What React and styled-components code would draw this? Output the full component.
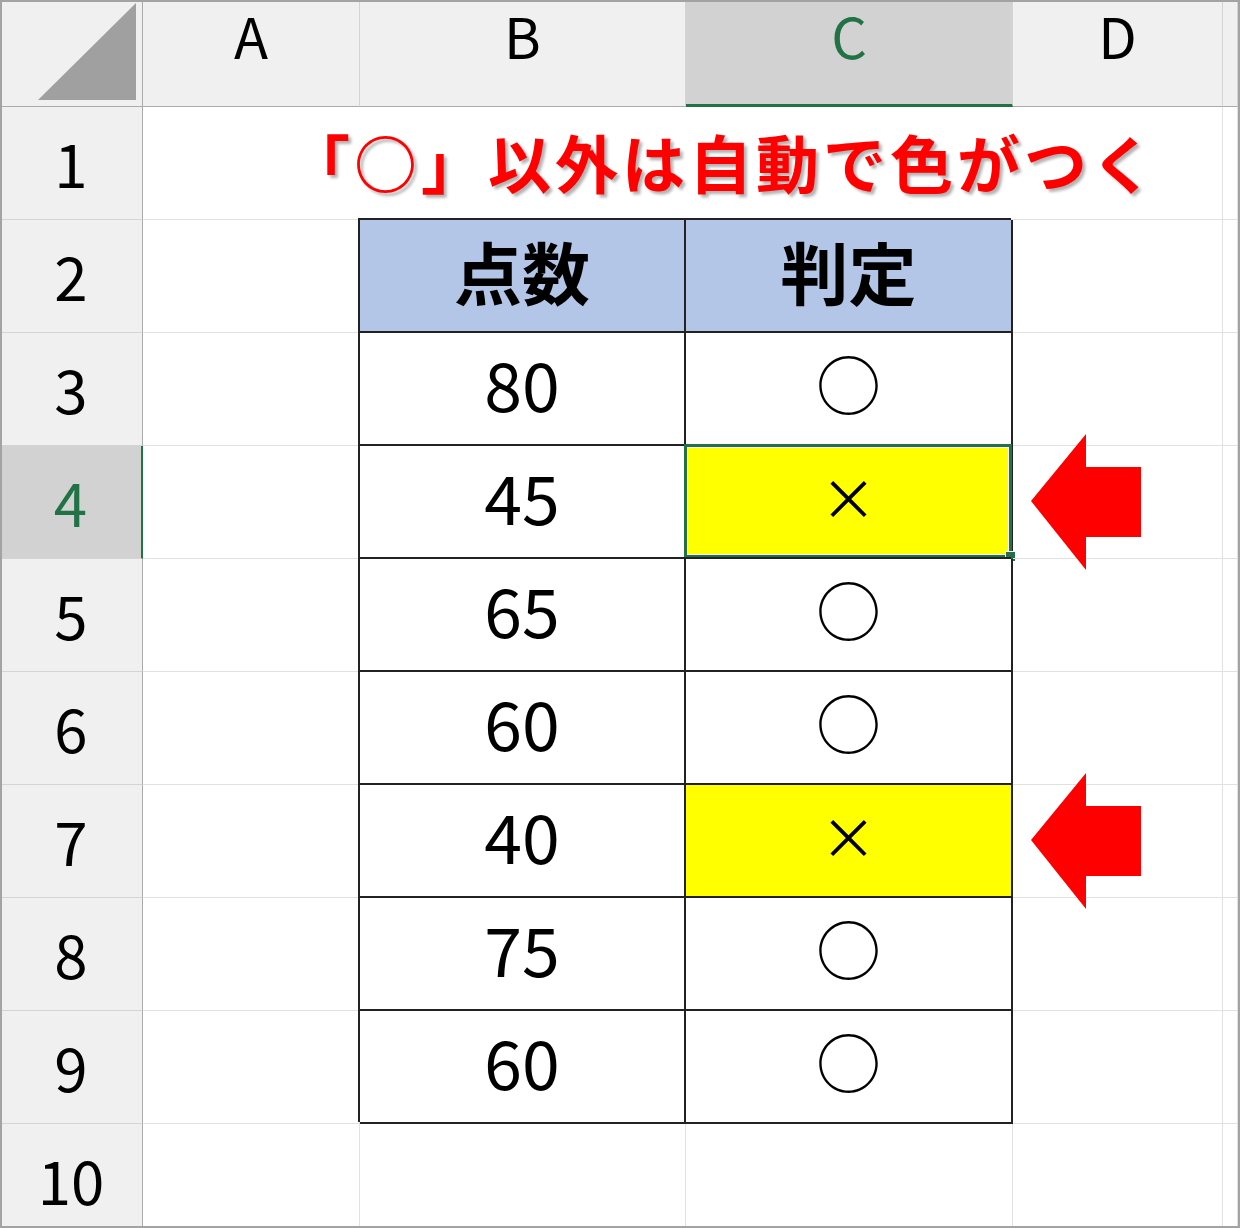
import React from 'react';
import styled, { createGlobalStyle, css } from 'styled-components';

const GlobalStyle = createGlobalStyle`
  html, body {
    margin: 0;
    padding: 0;
    background: #fff;
  }
  * {
    box-sizing: border-box;
  }
`;

const FONT = `'Noto Sans CJK JP', 'Noto Sans', sans-serif`;
const GREEN = '#217346';

const Sheet = styled.div`
  width: 1240px;
  height: 1228px;
  border: 2px solid #a3a3a3;
  overflow: hidden;
  background: #fff;
  display: grid;
  grid-template-columns: 141px 217px 326px 327px 210px 1fr;
  grid-template-rows: 105px repeat(10, 113px);
  font-family: ${FONT};
  color: #000;
`;

const Corner = styled.div`
  background: #f0f0f0;
  border-right: 1px solid #ababab;
  border-bottom: 1px solid #ababab;
  display: flex;
  justify-content: flex-end;
  align-items: flex-end;
  padding: 0 6px 6px 0;
  svg {
    display: block;
  }
`;

const ColHeader = styled.div`
  background: ${(p) => (p.$active ? '#d2d2d2' : '#f0f0f0')};
  border-right: 1px solid #d4d4d4;
  border-bottom: ${(p) => (p.$active ? `3px solid ${GREEN}` : '1px solid #ababab')};
  color: ${(p) => (p.$active ? GREEN : '#000')};
  font-size: 56px;
  line-height: 66px;
  display: flex;
  justify-content: center;
  align-items: flex-start;
`;

const RowHeader = styled.div`
  background: ${(p) => (p.$active ? '#d2d2d2' : '#f0f0f0')};
  border-right: ${(p) => (p.$active ? `2px solid ${GREEN}` : '1px solid #ababab')};
  border-bottom: 1px solid #d4d4d4;
  color: ${(p) => (p.$active ? GREEN : '#000')};
  font-size: 60px;
  display: flex;
  align-items: center;
  justify-content: center;
  padding: 0 2px 4px 0;
`;

const Cell = styled.div`
  border-right: 1px solid #e1e1e1;
  border-bottom: 1px solid #e1e1e1;
  display: flex;
  align-items: center;
  position: relative;
  ${(p) =>
    p.$span &&
    css`
      grid-column: span ${p.$span};
    `}
`;

const Title = styled.span`
  padding: 0 0 6px 144px;
  font-size: 63px;
  font-weight: 700;
  color: #ff0000;
  white-space: nowrap;
  letter-spacing: 4px;
  text-shadow: 3px 3px 3px rgba(0, 0, 0, 0.3);
`;

const TableCell = styled.div`
  position: relative;
  display: flex;
  align-items: center;
  justify-content: center;
  padding-bottom: ${(p) => (p.$head ? '10px' : '12px')};
  border-right: 2px solid #222;
  border-bottom: 2px solid #222;
  box-shadow: -2px -2px 0 #222;
  background: ${(p) => (p.$head ? '#b4c6e7' : p.$fill ? '#ffff00' : '#fff')};
  font-size: ${(p) => (p.$head ? '68px' : '68px')};
  font-weight: ${(p) => (p.$head ? 700 : 400)};
  line-height: 1;
`;

const Mark = styled.span`
  font-size: ${(p) => (p.$cross ? '56px' : '65px')};
  line-height: 1;
`;

const Selection = styled.div`
  position: absolute;
  inset: -2px -1px -1px -2px;
  border: 3px solid ${GREEN};
  box-shadow: inset 0 0 0 1px #fff;
  pointer-events: none;
  &::after {
    content: '';
    position: absolute;
    right: -6px;
    bottom: -6px;
    width: 9px;
    height: 9px;
    background: ${GREEN};
    outline: 1px solid #fff;
  }
`;

const ArrowCell = styled(Cell)`
  padding-left: 18px;
  svg {
    display: block;
    flex-shrink: 0;
    overflow: visible;
  }
`;

const Arrow = () => (
  <svg width="110" height="136" viewBox="0 0 110 136">
    <polygon points="0,67 55,0 55,33 110,33 110,103 55,103 55,136" fill="#ff0000" />
  </svg>
);

const rows = [
  { score: '80', mark: '○' },
  { score: '45', mark: '×' },
  { score: '65', mark: '○' },
  { score: '60', mark: '○' },
  { score: '40', mark: '×' },
  { score: '75', mark: '○' },
  { score: '60', mark: '○' },
];

const cols = ['A', 'B', 'C', 'D'];

export default function App() {
  return (
    <>
      <GlobalStyle />
      <Sheet>
        <Corner>
          <svg width="98" height="97" viewBox="0 0 98 97">
            <polygon points="0,97 98,97 98,0" fill="#a0a0a0" />
          </svg>
        </Corner>
        {cols.map((c) => (
          <ColHeader key={c} $active={c === 'C'}>
            {c}
          </ColHeader>
        ))}
        <ColHeader />

        <RowHeader>1</RowHeader>
        <Cell $span={4}>
          <Title>「○」以外は自動で色がつく</Title>
        </Cell>
        <Cell />

        <RowHeader>2</RowHeader>
        <Cell />
        <TableCell $head>点数</TableCell>
        <TableCell $head>判定</TableCell>
        <Cell />
        <Cell />

        {rows.map((r, i) => {
          const n = i + 3;
          const cross = r.mark === '×';
          return (
            <React.Fragment key={n}>
              <RowHeader $active={n === 4}>{n}</RowHeader>
              <Cell />
              <TableCell>{r.score}</TableCell>
              <TableCell $fill={cross}>
                <Mark $cross={cross}>{r.mark}</Mark>
                {n === 4 && <Selection />}
              </TableCell>
              {cross ? (
                <ArrowCell>
                  <Arrow />
                </ArrowCell>
              ) : (
                <Cell />
              )}
              <Cell />
            </React.Fragment>
          );
        })}

        <RowHeader>10</RowHeader>
        <Cell />
        <Cell />
        <Cell />
        <Cell />
        <Cell />
      </Sheet>
    </>
  );
}
